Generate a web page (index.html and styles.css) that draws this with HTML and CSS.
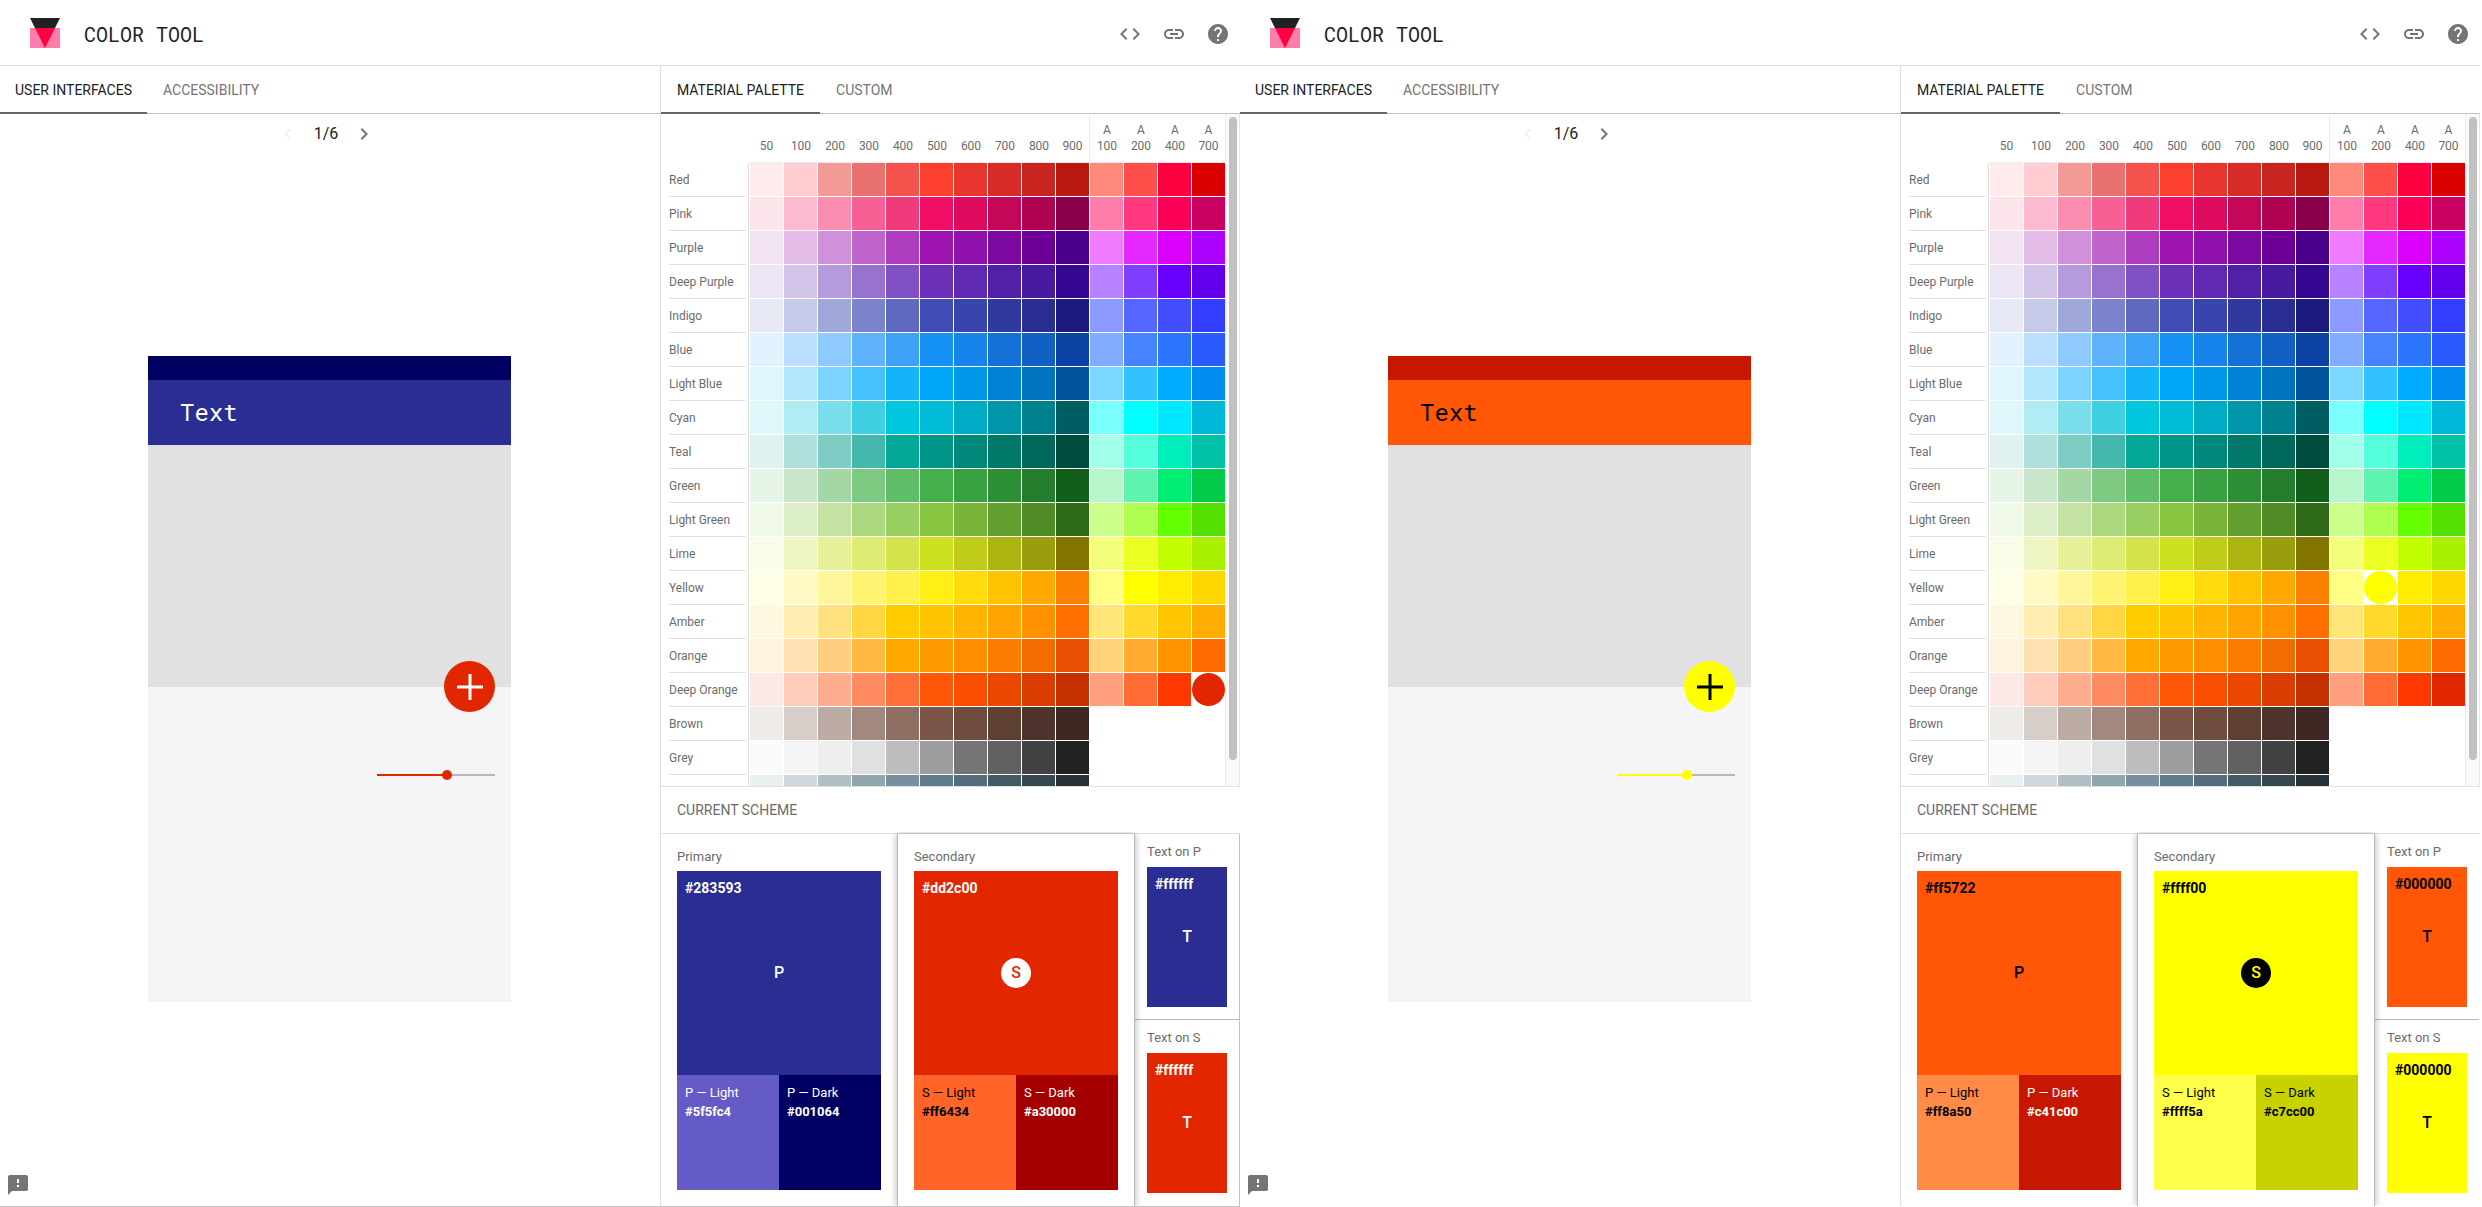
FILE: index.html
```html
<!DOCTYPE html>
<html lang="en">
<head>
<meta charset="utf-8">
<title>Color Tool</title>
<meta name="viewport" content="width=device-width, initial-scale=1">
<link rel="stylesheet" href="styles.css">
</head>
<body>
<svg class="sprite" aria-hidden="true">
  <symbol id="logo" viewBox="0 0 30 30"><path fill="#212121" d="M0 0h30l-5 10H5z"/><path fill="#ff7dab" d="M0 10h30v20H0z"/><path fill="#ff0040" d="M5 10h20L15 30z"/></symbol>
  <symbol id="code" viewBox="0 0 24 24"><path d="M9.4 16.6L4.8 12l4.6-4.6L8 6l-6 6 6 6 1.4-1.4zm5.2 0l4.6-4.6-4.6-4.6L16 6l6 6-6 6-1.4-1.4z"/></symbol>
  <symbol id="link" viewBox="0 0 24 24"><path d="M3.9 12c0-1.71 1.39-3.1 3.1-3.1h4V7H7c-2.76 0-5 2.24-5 5s2.24 5 5 5h4v-1.9H7c-1.71 0-3.1-1.39-3.1-3.1zM8 13h8v-2H8v2zm9-6h-4v1.9h4c1.71 0 3.1 1.39 3.1 3.1s-1.39 3.1-3.1 3.1h-4V17h4c2.76 0 5-2.24 5-5s-2.24-5-5-5z"/></symbol>
  <symbol id="help" viewBox="0 0 24 24"><path d="M12 2C6.48 2 2 6.48 2 12s4.48 10 10 10 10-4.48 10-10S17.52 2 12 2zm1 17h-2v-2h2v2zm2.07-7.75l-.9.92C13.45 12.9 13 13.5 13 15h-2v-.5c0-1.1.45-2.1 1.17-2.83l1.24-1.26c.37-.36.59-.86.59-1.41 0-1.1-.9-2-2-2s-2 .9-2 2H8c0-2.21 1.79-4 4-4s4 1.79 4 4c0 .88-.36 1.68-.93 2.25z"/></symbol>
  <symbol id="prev" viewBox="0 0 24 24"><path d="M15.41 7.41L14 6l-6 6 6 6 1.41-1.41L10.83 12z"/></symbol>
  <symbol id="next" viewBox="0 0 24 24"><path d="M10 6L8.59 7.41 13.17 12l-4.58 4.59L10 18l6-6z"/></symbol>
  <symbol id="plus" viewBox="0 0 26 26"><path d="M11.5 0h3v11.5H26v3H14.5V26h-3V14.5H0v-3h11.5z"/></symbol>
  <symbol id="feedback" viewBox="0 0 24 24"><path d="M20 2H4c-1.1 0-1.99.9-1.99 2L2 22l4-4h14c1.1 0 2-.9 2-2V4c0-1.1-.9-2-2-2zm-7 12h-2v-2h2v2zm0-4h-2V6h2v4z"/></symbol>
</svg>

<main class="tools">
  <section class="tool theme-indigo">
    <header class="topbar">
      <svg class="logo"><use href="#logo"/></svg>
      <h1 class="title">COLOR TOOL</h1>
      <nav class="actions">
        <button class="icon-btn" aria-label="Export code"><svg><use href="#code"/></svg></button>
        <button class="icon-btn" aria-label="Share link"><svg><use href="#link"/></svg></button>
        <button class="icon-btn" aria-label="Help"><svg><use href="#help"/></svg></button>
      </nav>
    </header>
    <div class="workspace">
      <div class="preview">
        <nav class="tabs">
          <button class="tab active">USER INTERFACES</button><button class="tab">ACCESSIBILITY</button>
        </nav>
        <div class="pager">
          <button class="icon-btn" aria-label="Previous" disabled><svg><use href="#prev"/></svg></button>
          <span class="page">1/6</span>
          <button class="icon-btn" aria-label="Next"><svg><use href="#next"/></svg></button>
        </div>
        <div class="stage">
          <div class="phone">
            <div class="statusbar"></div>
            <div class="appbar">Text</div>
            <div class="hero"><button class="fab" aria-label="Add"><svg><use href="#plus"/></svg></button></div>
            <div class="content"><input class="slider" type="range" value="60" aria-label="Amount"></div>
          </div>
        </div>
        <button class="icon-btn feedback" aria-label="Send feedback"><svg><use href="#feedback"/></svg></button>
      </div>
      <aside class="panel">
        <nav class="tabs">
          <button class="tab active">MATERIAL PALETTE</button><button class="tab">CUSTOM</button>
        </nav>
        <div class="palette">
          <div class="palette-scroll"><table class="swatches" data-selected="Deep Orange A700"></table></div>
          <div class="scrollbar" aria-hidden="true"><div class="scroll-thumb"></div></div>
        </div>
        <h2 class="scheme-title">CURRENT SCHEME</h2>
        <div class="scheme">
          <div class="card">
            <h3 class="card-label">Primary</h3>
            <button class="swatch main p"><b class="hex">#283593</b><span class="mark">P</span></button>
            <div class="variants">
              <div class="variant p-light"><span>P — Light</span><b>#5f5fc4</b></div>
              <div class="variant p-dark"><span>P — Dark</span><b>#001064</b></div>
            </div>
          </div>
          <div class="card raised">
            <h3 class="card-label">Secondary</h3>
            <button class="swatch main s"><b class="hex">#dd2c00</b><span class="mark disc">S</span></button>
            <div class="variants">
              <div class="variant s-light"><span>S — Light</span><b>#ff6434</b></div>
              <div class="variant s-dark"><span>S — Dark</span><b>#a30000</b></div>
            </div>
          </div>
          <div class="text-cards">
            <div class="text-card">
              <h3 class="card-label">Text on P</h3>
              <button class="swatch p"><b class="hex">#ffffff</b><span class="mark">T</span></button>
            </div>
            <div class="text-card">
              <h3 class="card-label">Text on S</h3>
              <button class="swatch s"><b class="hex">#ffffff</b><span class="mark">T</span></button>
            </div>
          </div>
        </div>
      </aside>
    </div>
  </section>

  <section class="tool theme-orange">
    <header class="topbar">
      <svg class="logo"><use href="#logo"/></svg>
      <h1 class="title">COLOR TOOL</h1>
      <nav class="actions">
        <button class="icon-btn" aria-label="Export code"><svg><use href="#code"/></svg></button>
        <button class="icon-btn" aria-label="Share link"><svg><use href="#link"/></svg></button>
        <button class="icon-btn" aria-label="Help"><svg><use href="#help"/></svg></button>
      </nav>
    </header>
    <div class="workspace">
      <div class="preview">
        <nav class="tabs">
          <button class="tab active">USER INTERFACES</button><button class="tab">ACCESSIBILITY</button>
        </nav>
        <div class="pager">
          <button class="icon-btn" aria-label="Previous" disabled><svg><use href="#prev"/></svg></button>
          <span class="page">1/6</span>
          <button class="icon-btn" aria-label="Next"><svg><use href="#next"/></svg></button>
        </div>
        <div class="stage">
          <div class="phone">
            <div class="statusbar"></div>
            <div class="appbar">Text</div>
            <div class="hero"><button class="fab" aria-label="Add"><svg><use href="#plus"/></svg></button></div>
            <div class="content"><input class="slider" type="range" value="60" aria-label="Amount"></div>
          </div>
        </div>
        <button class="icon-btn feedback" aria-label="Send feedback"><svg><use href="#feedback"/></svg></button>
      </div>
      <aside class="panel">
        <nav class="tabs">
          <button class="tab active">MATERIAL PALETTE</button><button class="tab">CUSTOM</button>
        </nav>
        <div class="palette">
          <div class="palette-scroll"><table class="swatches" data-selected="Yellow A200"></table></div>
          <div class="scrollbar" aria-hidden="true"><div class="scroll-thumb"></div></div>
        </div>
        <h2 class="scheme-title">CURRENT SCHEME</h2>
        <div class="scheme">
          <div class="card">
            <h3 class="card-label">Primary</h3>
            <button class="swatch main p"><b class="hex">#ff5722</b><span class="mark">P</span></button>
            <div class="variants">
              <div class="variant p-light"><span>P — Light</span><b>#ff8a50</b></div>
              <div class="variant p-dark"><span>P — Dark</span><b>#c41c00</b></div>
            </div>
          </div>
          <div class="card raised">
            <h3 class="card-label">Secondary</h3>
            <button class="swatch main s"><b class="hex">#ffff00</b><span class="mark disc">S</span></button>
            <div class="variants">
              <div class="variant s-light"><span>S — Light</span><b>#ffff5a</b></div>
              <div class="variant s-dark"><span>S — Dark</span><b>#c7cc00</b></div>
            </div>
          </div>
          <div class="text-cards">
            <div class="text-card">
              <h3 class="card-label">Text on P</h3>
              <button class="swatch p"><b class="hex">#000000</b><span class="mark">T</span></button>
            </div>
            <div class="text-card">
              <h3 class="card-label">Text on S</h3>
              <button class="swatch s"><b class="hex">#000000</b><span class="mark">T</span></button>
            </div>
          </div>
        </div>
      </aside>
    </div>
  </section>
</main>
<script src="palette.js"></script>
</body>
</html>
```
FILE: styles.css
```css
* { box-sizing: border-box; }

body {
  margin: 0;
  background: #fff;
  color: #212121;
  font-family: Roboto, "Liberation Sans", sans-serif;
  font-size: 14px;
}

h1, h2, h3 { margin: 0; font-weight: 400; }
button { margin: 0; padding: 0; border: 0; background: none; font: inherit; color: inherit; cursor: pointer; }
svg { display: block; fill: currentColor; }
.sprite { display: none; }

.tools {
  display: grid;
  grid-template-columns: 1fr 1fr;
  min-height: 100vh;
  padding-right: 2px;
}

.theme-indigo {
  --p: #2a2e92; --p-light: #655bc6; --p-dark: #000063;
  --s: #e22700; --s-light: #ff6528; --s-dark: #a50000;
  --on-p: #fff; --on-s: #fff;
  --on-p-light: #fff; --on-p-dark: #fff; --on-s-light: #000; --on-s-dark: #fff;
  --frame: #c4c4c4;
}
.theme-orange {
  --p: #ff5607; --p-light: #ff8b47; --p-dark: #c81700;
  --s: #ffff00; --s-light: #ffff4a; --s-dark: #c8d200;
  --on-p: #000; --on-s: #000;
  --on-p-light: #000; --on-p-dark: #fff; --on-s-light: #000; --on-s-dark: #000;
  --frame: #fff;
}

.tool {
  display: flex;
  flex-direction: column;
  border-bottom: 1px solid var(--frame);
}

/* Top bar */
.topbar {
  display: flex;
  align-items: center;
  height: 66px;
  padding: 0 10px 0 30px;
  border-bottom: 1px solid #e0e0e0;
}
.logo { width: 30px; height: 30px; }
.title {
  margin-left: 24px;
  padding-top: 2px;
  font: 20px/24px "Roboto Mono", "Liberation Mono", monospace;
}
.actions { display: flex; gap: 20px; margin-left: auto; padding-top: 3px; }
.icon-btn { color: #757575; }
.icon-btn svg { width: 24px; height: 24px; }
.icon-btn:disabled { color: #f0f0f0; }

.workspace {
  flex: 1;
  display: grid;
  grid-template-columns: 1fr 580px;
}

/* Tabs */
.tabs {
  display: flex;
  height: 48px;
  border-bottom: 1px solid #c4c4c4;
}
.tab {
  height: 48px;
  padding: 2px 16px 0;
  color: #757575;
  border-bottom: 2px solid transparent;
}
.tab.active { color: #212121; border-bottom-color: #666; }
.preview .tab.active { padding: 2px 15px 0; }

/* Preview */
.preview { position: relative; display: flex; flex-direction: column; }
.pager {
  display: flex;
  justify-content: center;
  align-items: center;
  gap: 14px;
  height: 38px;
  padding: 2px 8px 0 0;
}
.page { font-size: 16px; line-height: 24px; }
.stage { flex: 1; display: grid; place-items: center; padding-right: 1px; }
.phone {
  display: grid;
  grid-template-rows: 24px 65px 242px 1fr;
  width: min(363px, 100%);
  height: 646px;
  background: #f5f5f7;
}
.statusbar { background: var(--p-dark); }
.appbar {
  padding-left: 32px;
  background: var(--p);
  color: var(--on-p);
  font: 24px/65px "Roboto Mono", "Liberation Mono", monospace;
}
.hero { position: relative; background: #e1e1e1; }
.fab {
  position: absolute;
  right: 16px;
  bottom: -25px;
  display: grid;
  place-items: center;
  width: 51px;
  height: 51px;
  border-radius: 50%;
  background: var(--s);
  color: var(--on-s);
}
.fab svg { width: 26px; height: 26px; }
.content { display: flex; justify-content: flex-end; align-items: flex-start; padding: 83px 16px 0; }
.slider {
  appearance: none;
  width: 118px;
  height: 10px;
  margin: 0;
  background: linear-gradient(var(--s), var(--s)) left center / 60% 2px no-repeat,
    linear-gradient(#b8b8b8, #b8b8b8) center / 100% 2px no-repeat;
}
.slider::-webkit-slider-thumb {
  appearance: none;
  width: 10px;
  height: 10px;
  border-radius: 50%;
  background: var(--s);
}
.feedback { position: absolute; left: 6px; bottom: 9px; }

/* Side panel */
.panel {
  display: flex;
  flex-direction: column;
  border-left: 1px solid #e0e0e0;
}
.palette {
  flex: 1 1 0;
  min-height: 300px;
  display: flex;
  border-bottom: 1px solid #e0e0e0;
  border-right: 1px solid #e8e8e8;
  overflow: hidden;
}
.palette-scroll { flex: 1; overflow-y: auto; scrollbar-width: none; }
.scrollbar { width: 13px; padding: 3px 2px 26px 3px; background: #fafafa; }
.scroll-thumb { height: 100%; border-radius: 4px; background: #c1c1c1; }

.swatches {
  width: 565px;
  table-layout: fixed;
  border-collapse: separate;
  border-spacing: 0;
  color: #6c6c6c;
  font-size: 12px;
  line-height: 16px;
}
.swatches th, .swatches td { padding: 0; font-weight: 400; }
.col-name { width: 88px; }
.col-first { width: 35px; }
.swatches thead th {
  height: 49px;
  padding-bottom: 8px;
  vertical-align: bottom;
  border-bottom: 1px solid #ececec;
}
.swatches thead th:nth-child(11), .swatches tr > :last-child { border-right: 1px solid #ececec; }
.swatches tbody th {
  padding: 0 2px 0 8px;
  border-right: 1px solid #e0e0e0;
  text-align: left;
  white-space: nowrap;
}
.swatches tbody th span { display: block; padding-top: 1px; line-height: 32px; border-bottom: 1px solid #e0e0e0; }
.swatches tbody tr:last-child span { visibility: hidden; }
.swatches td { height: 34px; vertical-align: top; }
.swatches tbody td:nth-child(2) { padding-left: 1px; }
.cell { display: block; width: 33px; height: 33px; }
.cell.selected { border-radius: 50%; }

/* Current scheme */
.scheme-title {
  padding-left: 16px;
  border-bottom: 1px solid #e0e0e0;
  color: #6c6c6c;
  font-size: 14px;
  line-height: 46px;
}
.scheme {
  display: grid;
  grid-template-columns: 236px 238px 1fr;
  height: 372px;
  border-right: 1px solid var(--frame);
}
.card { padding: 14px 16px 0; }
.card.raised {
  z-index: 1;
  border: solid #b8b8b8;
  border-width: 0 1px;
  background: #fff;
  box-shadow: 0 0 8px rgba(0, 0, 0, .3);
  clip-path: inset(-2px -10px 0 -10px);
}
.card-label { color: #6c6c6c; font-size: 13px; line-height: 18px; margin-bottom: 5px; }
.swatch {
  display: grid;
  place-items: center;
  width: 100%;
  height: 140px;
  font-weight: 500;
}
.swatch > * { grid-area: 1 / 1; }
.swatch.main { height: 204px; }
.p { background: var(--p); color: var(--on-p); }
.s { background: var(--s); color: var(--on-s); }
.hex { place-self: start; padding: 8px; font-weight: 700; line-height: 18px; }
.mark { font-size: 16px; line-height: 30px; }
.disc { width: 30px; border-radius: 50%; background: var(--on-s); color: var(--s); }
.variants { display: grid; grid-template-columns: 1fr 1fr; height: 115px; }
.variant { display: flex; flex-direction: column; padding: 8px; font-size: 13px; line-height: 19px; }
.variant b { font-weight: 700; }
.p-light { background: var(--p-light); color: var(--on-p-light); }
.p-dark { background: var(--p-dark); color: var(--on-p-dark); }
.s-light { background: var(--s-light); color: var(--on-s-light); }
.s-dark { background: var(--s-dark); color: var(--on-s-dark); }
.text-cards { display: grid; grid-template-rows: 1fr 1fr; }
.text-card { padding: 9px 12px 0; }
.text-card:first-child { border-bottom: 1px solid #b8b8b8; }
.text-card .card-label { margin-bottom: 6px; }
```
FILE: palette.js
```js
// Hues in display order; the last four values of a row are its accents.
const SHADES = ["50", "100", "200", "300", "400", "500", "600", "700", "800", "900", "A100", "A200", "A400", "A700"];
const HUES = {
  "Red": "ffebec ffcdd1 f39a97 e9716f f4524c fc402d ea352e d62b27 c82420 ba1911 ff897b ff4f4b ff0040 da0000",
  "Pink": "fce4eb fcbad1 fa8db0 f66095 f13a7b ef0e62 dd0a5e c50758 b00452 8a004b ff7dab ff387f fb0057 c90062",
  "Purple": "f3e4f4 e3bde8 d191da be64ca ad3cbe 9e12b0 8f10aa 7c08a0 6d0099 4b008b f07bff e528ff dc00ff ac00ff",
  "Deep Purple": "ece6f6 d3c4ea b59ade 9772cf 8150c4 6b30b7 6029b1 5220a7 471aa0 340891 b682ff 803eff 6800ff 6400ec",
  "Indigo": "e7eaf5 c5cae8 a0a7da 7a83cb 5f69c0 424eb7 3a44ad 30399f 2a2e92 1b1c7d 8d9aff 5565ff 434eff 333dff",
  "Blue": "e2f2ff badefe 8fcafc 5fb3fb 3ea1f8 1692f7 1684ea 1370d7 1160c3 0c42a4 82adff 4583ff 2b75ff 2b5bff",
  "Light Blue": "e0f5fe b2e6fd 7dd4fc 45c1fc 14b4fb 00a5f8 0097e8 0083d5 0073c0 00559d 7cd7ff 31c2ff 00acff 008ef0",
  "Cyan": "dff7fa b0ecf3 7adfea 3fd0e2 00c7dd 00bcd8 00abc5 0096aa 00818f 005e63 7affff 00ffff 00e8ff 00b8d8",
  "Teal": "dff2f0 b0e0dc 7dcdc5 44b8ac 05a799 009688 00897b 00796b 00695b 004d3f a2ffea 55ffdc 00eebc 00c1a7",
  "Green": "e7f5e9 c8e7ca a3d7a6 7dc982 5fbd67 43b04b 39a141 2d8f35 237d2c 125f1c b7f7cb 5ef4af 00ee72 00cb4b",
  "Light Green": "f1f9e8 dceec7 c4e3a2 abd87e 99cf61 87c540 78b437 639f2f 4f8c26 2e6a17 cbff8c aeff50 64ff00 54e000",
  "Lime": "f9fce6 eff5c2 e6f098 dceb72 d3e34c cbe01f bfcc19 acb412 9a9e0d 817500 f3ff7c ecff22 c1ff00 a8f000",
  "Yellow": "fffee6 fffac3 fff69a fff372 fff04c ffef17 ffdb0e ffc200 ffa900 fa8100 ffff86 ffff00 ffec00 ffd800",
  "Amber": "fff8e0 ffedb2 ffe180 ffd743 ffcc00 ffc300 ffb500 ffa300 ff9100 ff7000 ffe679 ffd92b ffc600 ffad00",
  "Orange": "fff2df ffe0b1 ffce7f ffb942 ffa800 ff9900 ff8d00 fb7c00 f36c00 ea4e00 ffd27c ffac31 ff9300 ff6c00",
  "Deep Orange": "fce8e7 ffccbb ffac8f ff8b62 ff7039 ff5607 fa4f00 eb4700 db3d00 c43000 ff9f7d ff6d35 ff3800 e22700",
  "Brown": "eeebe9 d7cdc9 bdaba5 a2887f 8f6e63 7b5548 6e4c40 5e4035 4f342e 3f2723",
  "Grey": "fafafa f5f5f5 eeeeee e0e0e0 bdbdbd 9e9e9e 757575 616161 424242 212121",
  "Blue Grey": "eaeff2 cfd8dd b0bec5 90a4ae 78909d 5f7c8c 536e7a 455a64 37474f 263238"
};

function cell(hue, shade, color, selected) {
  if (!color) return "<td></td>";
  const name = `${hue} ${shade}`;
  const state = name === selected ? " selected" : "";
  return `<td><button class="cell${state}" aria-label="${name}" style="background:#${color}"></button></td>`;
}

for (const table of document.querySelectorAll(".swatches")) {
  const heads = SHADES.map(s => `<th scope="col">${s.replace("A", "A<br>")}</th>`).join("");
  const rows = Object.entries(HUES).map(([hue, list]) => {
    const colors = list.split(" ");
    const cells = SHADES.map((s, i) => cell(hue, s, colors[i], table.dataset.selected)).join("");
    return `<tr><th scope="row"><span>${hue}</span></th>${cells}</tr>`;
  }).join("");
  table.innerHTML = `<colgroup><col class="col-name"><col class="col-first"><col span="13"></colgroup>` +
    `<thead><tr><td></td>${heads}</tr></thead><tbody>${rows}</tbody>`;
}
```
